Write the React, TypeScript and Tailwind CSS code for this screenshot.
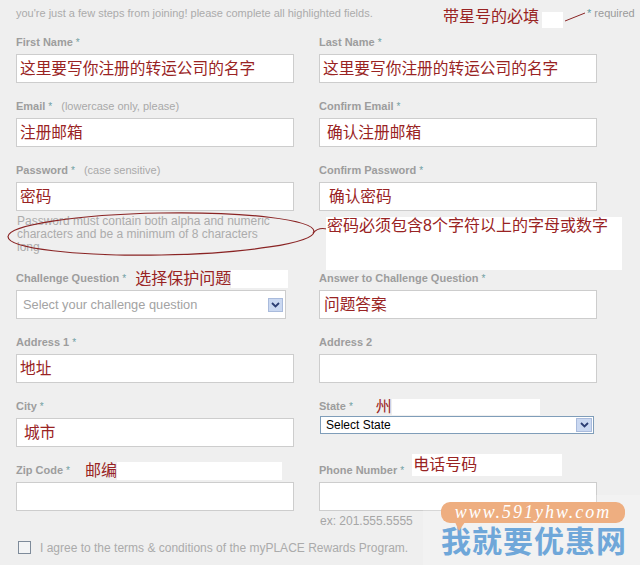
import type { ReactNode } from 'react';

const RED = 'text-[#992323]';

function Star() {
  return <span className="ml-[3px] text-[10px] font-normal text-[#6f9fa3]">*</span>;
}

function Label({ children }: { children: ReactNode }) {
  return (
    <div className="flex h-[13px] items-center whitespace-nowrap text-[11px] leading-[13px] font-bold text-[#9d9d9d]">
      {children}
    </div>
  );
}

function TextBox({ value, pad = 'pl-[3px]' }: { value?: string; pad?: string }) {
  return (
    <div
      className={`mt-[5px] flex h-[29px] w-[278px] items-center border border-[#cdcdcd] bg-white text-[15.7px] leading-none ${RED} ${pad}`}
    >
      {value}
    </div>
  );
}

// small blue dropdown button used by both selects
function Arrow({ size = 'w-[15px] h-[14px]' }: { size?: string }) {
  return (
    <span className={`ml-auto flex items-center justify-center border border-[#a9bbdc] bg-[#cad8f1] ${size}`}>
      <svg width="9" height="6" viewBox="0 0 9 6" aria-hidden="true">
        <path d="M1 1 L4.5 4.5 L8 1" fill="none" stroke="#2c3e73" strokeWidth="1.8" />
      </svg>
    </span>
  );
}

export default function App() {
  return (
    <div className="relative h-[565px] w-[640px] overflow-hidden bg-[#efefef] pl-[16px] font-['Liberation_Sans','Noto_Sans_CJK_SC',sans-serif]">
      {/* intro line + note about required fields */}
      <div className="flex h-[29px] items-start whitespace-nowrap">
        <span className="mt-[7px] w-[427px] text-[11px] leading-[13px] text-[#ababab]">
          you're just a few steps from joining! please complete all highlighted fields.
        </span>
        <span className={`mt-[8px] text-[16px] leading-[18px] ${RED}`}>带星号的必填</span>
        <span className="mt-[12px] ml-[3px] h-[16px] w-[21px] bg-white" />
        <svg width="24" height="29" viewBox="0 0 24 29" aria-hidden="true">
          <path d="M2 21 L22 13" stroke="#8a2424" strokeWidth="1" fill="none" />
        </svg>
        <span className="mt-[7px] text-[11px] leading-[13px] text-[#9a9a9a]">
          <span className="text-[#5e9aa0]">*</span> required
        </span>
      </div>

      <div className="mt-[7px] grid grid-cols-[278px_278px] items-start gap-x-[25px] gap-y-[17px]">
        <div>
          <Label>First Name<Star /></Label>
          <TextBox value="这里要写你注册的转运公司的名字" />
        </div>
        <div>
          <Label>Last Name<Star /></Label>
          <TextBox value="这里要写你注册的转运公司的名字" />
        </div>

        <div>
          <Label>
            Email<Star />
            <span className="ml-[9px] font-normal text-[#a9a9a9]">(lowercase only, please)</span>
          </Label>
          <TextBox value="注册邮箱" />
        </div>
        <div>
          <Label>Confirm Email<Star /></Label>
          <TextBox value="确认注册邮箱" pad="pl-[7px]" />
        </div>

        <div className="pb-[1px]">
          <Label>
            Password<Star />
            <span className="ml-[9px] font-normal text-[#a9a9a9]">(case sensitive)</span>
          </Label>
          <TextBox value="密码" />
          <p className="mt-[4px] w-[260px] pl-[1px] text-[12px] leading-[13px] text-[#acacac]">
            Password must contain both alpha and numeric characters and be a minimum of 8 characters long
          </p>
        </div>
        <div>
          <Label>Confirm Password<Star /></Label>
          <TextBox value="确认密码" pad="pl-[9px]" />
        </div>

        <div>
          <Label>
            Challenge Question<Star />
            <span className={`ml-[9px] text-[16px] leading-[18px] font-normal ${RED}`}>选择保护问题</span>
            <span className="h-[18px] w-[57px] bg-white" />
          </Label>
          <div className="mt-[5px] flex h-[29px] w-[270px] items-center border border-[#cdcdcd] bg-white pr-[2px] pl-[6px] text-[12.8px] text-[#a3a3a3]">
            Select your challenge question
            <Arrow />
          </div>
        </div>
        <div>
          <Label>Answer to Challenge Question<Star /></Label>
          <TextBox value="问题答案" pad="pl-[4px]" />
        </div>

        <div>
          <Label>Address 1<Star /></Label>
          <TextBox value="地址" />
        </div>
        <div>
          <Label>Address 2</Label>
          <TextBox />
        </div>

        <div>
          <Label>City<Star /></Label>
          <TextBox value="城市" pad="pl-[7px]" />
        </div>
        <div>
          <Label>
            State<Star />
            <span className={`ml-[23px] text-[16px] leading-[18px] font-normal ${RED}`}>州</span>
            <span className="h-[16px] w-[148px] bg-white" />
          </Label>
          <div className="mt-[3px] ml-[1px] flex h-[18px] w-[274px] items-center border border-[#7f9db9] bg-white pr-[1px] pl-[5px] text-[12px] text-black">
            Select State
            <Arrow size="w-[16px] h-[14px]" />
          </div>
        </div>

        <div>
          <Label>
            Zip Code<Star />
            <span className={`ml-[15px] text-[16px] leading-[18px] font-normal ${RED}`}>邮编</span>
            <span className="h-[18px] w-[165px] bg-white" />
          </Label>
          <TextBox />
        </div>
        <div>
          <Label>
            Phone Number<Star />
            <span
              className={`ml-[8px] flex h-[22px] w-[150px] -translate-y-[6px] items-center bg-white pl-[1px] text-[16px] font-normal ${RED}`}
            >
              电话号码
            </span>
          </Label>
          <TextBox />
          <div className="mt-[4px] pl-[1px] text-[12px] leading-[13px] text-[#a6a6a6]">ex: 201.555.5555</div>
        </div>
      </div>

      <div className="mt-[12px] flex h-[15px] items-center gap-[9px] pl-[2px]">
        <span className="h-[13px] w-[13px] border border-[#7e8b9a] bg-[#f3f4f5]" />
        <span className="text-[12px] text-[#ababab]">
          I agree to the terms &amp; conditions of the myPLACE Rewards Program.
        </span>
      </div>

      {/* annotations drawn over the form */}
      <svg className="pointer-events-none absolute top-0 left-0" width="640" height="565" aria-hidden="true">
        <ellipse
          cx="161"
          cy="234"
          rx="153"
          ry="21"
          transform="rotate(-1 161 234)"
          fill="none"
          stroke="#8a2424"
          strokeWidth="1.2"
        />
        <path d="M313 233 Q318 227 327 229" fill="none" stroke="#8a2424" strokeWidth="1.2" />
      </svg>
      <div className="absolute top-[217px] left-[326px] h-[53px] w-[296px] bg-white">
        <span className={`block pl-[1px] text-[16px] leading-[18px] ${RED}`}>密码必须包含8个字符以上的字母或数字</span>
      </div>

      {/* site watermark */}
      <div className="absolute top-[495px] left-[423px] h-[70px] w-[217px] bg-white/20" />
      <div className="absolute top-[502px] left-[441px] flex flex-col">
        <div className="relative flex h-[21px] w-[184px] items-center justify-center rounded-[9px] bg-[#eeae80] font-['Liberation_Serif',serif] text-[18px] tracking-[2px] text-white italic">
          www.591yhw.com
          <span className="absolute top-[20px] left-[14px] h-0 w-0 border-t-[9px] border-r-[6px] border-l-[4px] border-t-[#eeae80] border-r-transparent border-l-transparent" />
        </div>
        <div className="mt-[3px] text-[30px] leading-[32px] font-bold tracking-[1px] text-[#6fa7d9]">我就要优惠网</div>
      </div>
    </div>
  );
}
